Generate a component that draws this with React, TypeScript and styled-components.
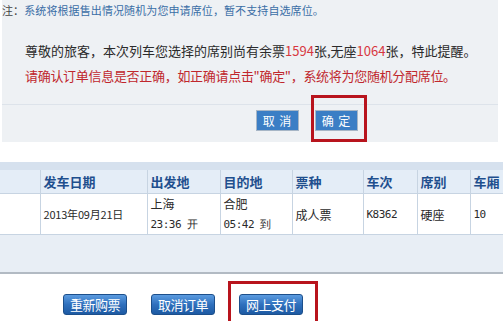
import styled, {createGlobalStyle} from 'styled-components';

const GlobalStyle = createGlobalStyle`
  html, body {
    margin: 0;
    padding: 0;
    background: #ffffff;
  }
  body {
    font-family: 'Noto Sans CJK SC', 'Liberation Sans', sans-serif;
    color: #333;
  }
`;

interface Column {
  title: string;
  width: number;
}

const columns: Column[] = [
  {title: '', width: 40},
  {title: '发车日期', width: 107},
  {title: '出发地', width: 73},
  {title: '目的地', width: 72},
  {title: '票种', width: 71},
  {title: '车次', width: 54},
  {title: '席别', width: 53},
  {title: '车厢', width: 60},
];

const App = () => {
  return (
    <Page>
      <GlobalStyle />
      <Dialog>
        <Note>
          <span className="lead">注：</span>系统将根据售出情况随机为您申请席位，暂不支持自选席位。
        </Note>
        <Message>
          <p>
            尊敬的旅客，本次列车您选择的席别尚有余票<Num>1594</Num>张,无座<Num>1064</Num>张，特此提醒。
          </p>
          <p className="warn">请确认订单信息是否正确，如正确请点击"确定"，系统将为您随机分配席位。</p>
        </Message>
        <DialogActions>
          <FlatButton>取 消</FlatButton>
          <Highlight $top={12} $bottom={8} $left={1} $right={6}>
            <FlatButton>确 定</FlatButton>
          </Highlight>
        </DialogActions>
      </Dialog>

      <TableWrap>
        <TopBand />
        <OrderTable>
          <colgroup>
            {columns.map((c, i) => (
              <col key={i} style={{width: c.width}} />
            ))}
          </colgroup>
          <thead>
            <tr>
              {columns.map((c, i) => (
                <th key={i}>{c.title}</th>
              ))}
            </tr>
          </thead>
          <tbody>
            <tr className="data">
              <td></td>
              <td className="small">2013年09月21日</td>
              <td>
                上海
                <br />
                <span className="mono">23:36 开</span>
              </td>
              <td>
                合肥
                <br />
                <span className="mono">05:42 到</span>
              </td>
              <td>成人票</td>
              <td className="mono">K8362</td>
              <td>硬座</td>
              <td className="mono">10</td>
            </tr>
            <tr className="blank">
              <td colSpan={8}></td>
            </tr>
          </tbody>
        </OrderTable>
      </TableWrap>

      <Actions>
        <GlossButton>重新购票</GlossButton>
        <GlossButton>取消订单</GlossButton>
        <Highlight $top={10} $bottom={8} $left={8} $right={12}>
          <GlossButton>网上支付</GlossButton>
        </Highlight>
      </Actions>
    </Page>
  );
};

const Page = styled.div`
  width: 503px;
  height: 321px;
  overflow: hidden;
`;

const Dialog = styled.div`
  margin-left: 2px;
  width: 496px;
  height: 142px;
  background-color: #eef1f4;
  display: flex;
  flex-direction: column;
`;

const Note = styled.div`
  font-size: 11px;
  line-height: 14px;
  padding-top: 3px;
  color: #3a6ea6;
  letter-spacing: 0.1px;
  .lead {
    color: #444;
  }
`;

const Message = styled.div`
  padding: 21px 0 0 23px;
  font-size: 13px;
  color: #2b2b2b;
  p {
    margin: 0;
    line-height: 25px;
  }
  .warn {
    color: #c0272d;
    letter-spacing: -0.3px;
  }
`;

const Num = styled.span`
  color: #d8373f;
`;

const DialogActions = styled.div`
  margin-top: 16px;
  border-top: 1px solid #dde3ea;
  padding: 5px 0 0 254px;
  display: flex;
  align-items: flex-start;
  gap: 16px;
`;

const FlatButton = styled.button`
  width: 43px;
  height: 21px;
  padding: 0;
  border: 1px solid #a7b6c6;
  background-color: #3b7ec5;
  color: #fff;
  font-family: 'Noto Sans CJK SC', sans-serif;
  font-size: 12px;
  line-height: 19px;
  letter-spacing: 1px;
`;

const Highlight = styled.span<{$top: number; $bottom: number; $left: number; $right: number}>`
  display: inline-flex;
  border: 3px solid #b8141d;
  padding: ${(p) => `${p.$top}px ${p.$right}px ${p.$bottom}px ${p.$left}px`};
  margin: ${(p) => `-${p.$top + 3}px -${p.$right + 3}px -${p.$bottom + 3}px -${p.$left + 3}px`};
  position: relative;
`;

const TableWrap = styled.div`
  margin-top: 20px;
  width: 503px;
  overflow: hidden;
`;

const TopBand = styled.div`
  height: 8px;
  background-color: #d6e1ee;
`;

const OrderTable = styled.table`
  border-collapse: collapse;
  table-layout: fixed;
  width: 530px;
  th {
    height: 23px;
    padding: 0 0 0 3px;
    text-align: left;
    font-size: 13px;
    font-weight: bold;
    color: #1f4f8e;
    background-color: #e4edf7;
    border-right: 1px solid #c7d4e2;
    border-bottom: 1px solid #c7d4e2;
  }
  td {
    padding: 0 0 0 3px;
    font-size: 12px;
    color: #2a2a2a;
    border-right: 1px solid #c7d4e2;
    line-height: 19px;
  }
  .data td {
    height: 39px;
    background-color: #ffffff;
    border-bottom: 1px solid #c7d4e2;
  }
  .small {
    font-size: 11px;
    letter-spacing: -0.2px;
  }
  .mono {
    font-family: 'DejaVu Sans Mono', 'Liberation Mono', monospace;
    font-size: 11px;
    letter-spacing: -0.5px;
  }
  .blank td {
    height: 37px;
    background-color: #e8eef5;
    border-right: none;
    border-bottom: 2px solid #b2bac3;
  }
`;

const Actions = styled.div`
  display: flex;
  gap: 24px;
  padding: 20px 0 0 63px;
  align-items: flex-start;
`;

const GlossButton = styled.button`
  width: 64px;
  height: 21px;
  padding: 0;
  border: 1px solid #1c4f8b;
  border-radius: 3px;
  background: linear-gradient(#5b9be0 0%, #2f70bd 50%, #1d5aa3 100%);
  color: #fff;
  font-family: 'Noto Sans CJK SC', sans-serif;
  font-size: 13px;
  line-height: 19px;
  letter-spacing: -0.5px;
`;

export default App;
